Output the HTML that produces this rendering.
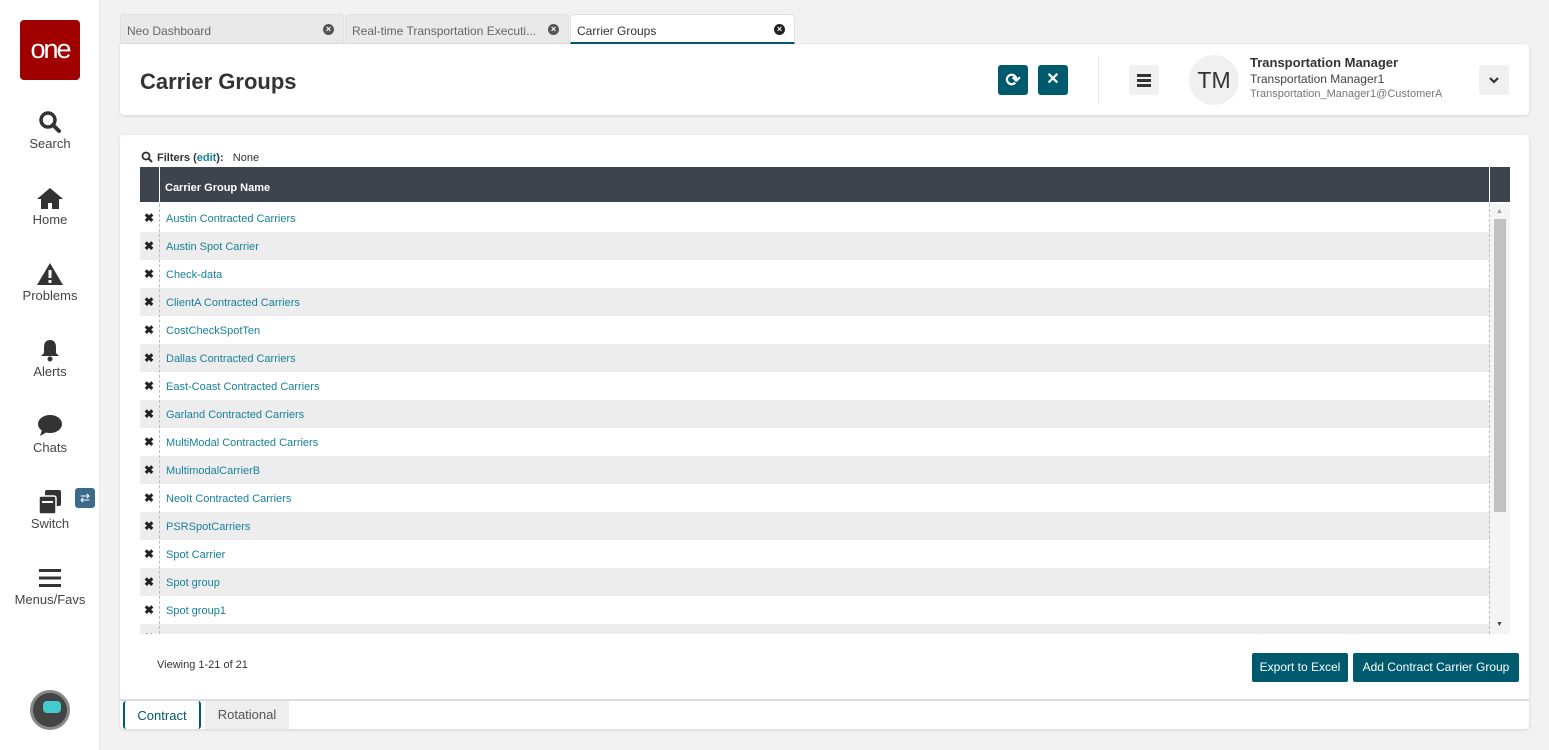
<!DOCTYPE html>
<html><head><meta charset="utf-8"><style>
*{box-sizing:border-box;margin:0;padding:0}
body{width:1549px;height:750px;background:#f2f2f2;font-family:"Liberation Sans",sans-serif;position:relative;overflow:hidden;color:#333}
.side{position:absolute;left:0;top:0;width:100px;height:750px;background:#fff;border-right:1px solid #e6e6e6}
.logo{position:absolute;left:20px;top:20px;width:60px;height:60px;background:#a00000;border-radius:4px;color:#fff;font-size:27px;text-align:center;line-height:58px;letter-spacing:-2px}
.nav{position:absolute;left:0;width:100px;text-align:center;font-size:13px;color:#444}
.nav svg{display:block;margin:0 auto 2px}
.tab{position:absolute;top:14px;height:30px;background:#e9e9e9;border-radius:4px 4px 0 0;font-size:12px;color:#666;padding:9px 6px;border:1px solid #e0e0e0}
.tab .x{position:absolute;right:9px;top:9px;width:11px;height:11px;border-radius:50%;background:#555;color:#fff;font-size:9px;line-height:11px;text-align:center;font-weight:bold}
.card{position:absolute;background:#fff;border-radius:4px;box-shadow:0 1px 3px rgba(0,0,0,.12)}
.btn{position:absolute;background:#005a6e;border-radius:3px;color:#fff;text-align:center}
.rows div.r{height:28px;position:relative;font-size:11px}
.rows div.r:nth-child(even){background:#ededed}
.r .x{position:absolute;left:4px;top:7px;font-size:12px;font-weight:bold;color:#222}
.r .t{position:absolute;left:26px;top:9px;color:#17819a}
</style></head><body>
<div class="side">
<div class="logo">one</div>
<div class="nav" style="top:110px"><svg width="24" height="24" viewBox="0 0 24 24"><circle cx="10" cy="10" r="7" stroke="#333" stroke-width="3.5" fill="none"/><path d="M15 15l6 6" stroke="#333" stroke-width="4" stroke-linecap="round"/></svg>Search</div>
<div class="nav" style="top:186px"><svg width="28" height="24" viewBox="0 0 28 24"><path d="M14 2L1 13h4v10h7v-6h4v6h7V13h4z" fill="#333"/></svg>Home</div>
<div class="nav" style="top:262px"><svg width="28" height="24" viewBox="0 0 28 24"><path d="M14 1L1 23h26z" fill="#333"/><rect x="12.5" y="8" width="3" height="8" fill="#fff"/><rect x="12.5" y="18" width="3" height="3" fill="#fff"/></svg>Problems</div>
<div class="nav" style="top:338px"><svg width="24" height="24" viewBox="0 0 24 24"><path d="M12 2c-4 0-6 3-6 7v6l-3 3h18l-3-3V9c0-4-2-7-6-7z" fill="#333"/><circle cx="12" cy="21" r="2.5" fill="#333"/></svg>Alerts</div>
<div class="nav" style="top:414px"><svg width="26" height="24" viewBox="0 0 26 24"><ellipse cx="13" cy="10" rx="12" ry="9" fill="#333"/><path d="M5 16l-2 6 7-4z" fill="#333"/></svg>Chats</div>
<div class="nav" style="top:490px"><svg width="26" height="24" viewBox="0 0 26 24"><rect x="8" y="0" width="16" height="16" rx="2" fill="#333"/><rect x="2" y="6" width="17" height="18" rx="2" fill="#333" stroke="#fff" stroke-width="1.5"/><rect x="5" y="11" width="11" height="2" fill="#fff"/></svg>Switch</div>
<div style="position:absolute;left:75px;top:488px;width:20px;height:20px;background:#3c6a8c;border-radius:3px;color:#fff;font-size:12px;text-align:center;line-height:20px">⇄</div>
<div class="nav" style="top:566px"><svg width="24" height="24" viewBox="0 0 24 24"><rect x="1" y="3" width="22" height="3" fill="#333"/><rect x="1" y="10.5" width="22" height="3" fill="#333"/><rect x="1" y="18" width="22" height="3" fill="#333"/></svg>Menus/Favs</div>
<div style="position:absolute;left:30px;top:690px;width:40px;height:40px;border-radius:50%;background:#444;border:3px solid #888"><div style="position:absolute;left:10px;top:8px;width:18px;height:12px;background:#4cc;border-radius:4px"></div></div>
</div>
<div class="tab" style="left:120px;width:224px">Neo Dashboard<span class="x">×</span></div>
<div class="tab" style="left:345px;width:224px">Real-time Transportation Executi...<span class="x">×</span></div>
<div class="tab" style="left:570px;width:225px;background:#fff;color:#333;border-bottom:2px solid #005a6e">Carrier Groups<span class="x" style="background:#222">×</span></div>
<div class="card" style="left:120px;top:44px;width:1409px;height:71px;border-radius:0 4px 4px 4px">
<div style="position:absolute;left:20px;top:25px;font-size:22px;font-weight:bold;color:#333">Carrier Groups</div>
<div class="btn" style="left:878px;top:21px;width:30px;height:30px;font-size:18px;line-height:30px;font-weight:bold">⟳</div>
<div class="btn" style="left:918px;top:21px;width:30px;height:30px;font-size:16px;line-height:30px;font-weight:bold">✕</div>
<div style="position:absolute;left:978px;top:12px;width:1px;height:48px;background:#e5e5e5"></div>
<div style="position:absolute;left:1009px;top:21px;width:30px;height:30px;background:#f0f0f0;border-radius:3px"><div style="position:absolute;left:8px;top:9px;width:14px;height:2.5px;background:#333;box-shadow:0 5px 0 #333,0 10px 0 #333"></div></div>
<div style="position:absolute;left:1069px;top:11px;width:50px;height:50px;border-radius:50%;background:#f0f0f0;font-size:23px;line-height:50px;text-align:center;color:#333">TM</div>
<div style="position:absolute;left:1130px;top:11px;font-size:13px;font-weight:bold">Transportation Manager</div>
<div style="position:absolute;left:1130px;top:28px;font-size:12px;color:#444">Transportation Manager1</div>
<div style="position:absolute;left:1130px;top:44px;font-size:11px;color:#777">Transportation_Manager1@CustomerA</div>
<div style="position:absolute;left:1359px;top:21px;width:30px;height:30px;background:#f0f0f0;border-radius:3px"><svg width="30" height="30" viewBox="0 0 30 30"><path d="M11 13l4 4 4-4" stroke="#333" stroke-width="2.2" fill="none"/></svg></div>
</div>
<div class="card" style="left:120px;top:135px;width:1409px;height:594px">
<svg style="position:absolute;left:21px;top:16px" width="12" height="12" viewBox="0 0 12 12"><circle cx="5" cy="5" r="3.5" stroke="#333" stroke-width="1.8" fill="none"/><path d="M7.5 7.5l3.5 3.5" stroke="#333" stroke-width="2"/></svg>
<div style="position:absolute;left:37px;top:17px;font-size:11px"><b>Filters (<span style="color:#17819a">edit</span>):</b> &nbsp;&nbsp;None</div>
<div style="position:absolute;left:20px;top:32px;width:1370px;height:35px;background:#3d444e"><div style="position:absolute;left:19px;top:0;width:1px;height:35px;background:#fff"></div><div style="position:absolute;left:1349px;top:0;width:1px;height:35px;background:#fff"></div><div style="position:absolute;left:25px;top:15px;color:#fff;font-size:11px;font-weight:bold">Carrier Group Name</div></div>
<div style="position:absolute;left:20px;top:69px;width:1350px;height:430px;overflow:hidden" class="rows">
<div class="r"><span class="x">✖</span><span class="t">Austin Contracted Carriers</span></div>
<div class="r"><span class="x">✖</span><span class="t">Austin Spot Carrier</span></div>
<div class="r"><span class="x">✖</span><span class="t">Check-data</span></div>
<div class="r"><span class="x">✖</span><span class="t">ClientA Contracted Carriers</span></div>
<div class="r"><span class="x">✖</span><span class="t">CostCheckSpotTen</span></div>
<div class="r"><span class="x">✖</span><span class="t">Dallas Contracted Carriers</span></div>
<div class="r"><span class="x">✖</span><span class="t">East-Coast Contracted Carriers</span></div>
<div class="r"><span class="x">✖</span><span class="t">Garland Contracted Carriers</span></div>
<div class="r"><span class="x">✖</span><span class="t">MultiModal Contracted Carriers</span></div>
<div class="r"><span class="x">✖</span><span class="t">MultimodalCarrierB</span></div>
<div class="r"><span class="x">✖</span><span class="t">NeoIt Contracted Carriers</span></div>
<div class="r"><span class="x">✖</span><span class="t">PSRSpotCarriers</span></div>
<div class="r"><span class="x">✖</span><span class="t">Spot Carrier</span></div>
<div class="r"><span class="x">✖</span><span class="t">Spot group</span></div>
<div class="r"><span class="x">✖</span><span class="t">Spot group1</span></div>
<div class="r"><span class="x">✖</span><span class="t"></span></div>
<div style="position:absolute;left:19px;top:0;height:430px;border-left:1px dashed #bbb"></div>
<div style="position:absolute;left:1349px;top:0;height:430px;border-left:1px dashed #bbb"></div>
</div>
<div style="position:absolute;left:1370px;top:69px;width:20px;height:430px;background:#f4f4f4"><div style="position:absolute;left:4px;top:15px;width:12px;height:293px;background:#c1c1c1"></div><div style="position:absolute;left:6px;top:4px;font-size:7px;color:#999">▲</div><div style="position:absolute;left:6px;top:417px;font-size:7px;color:#444">▼</div></div>
<div style="position:absolute;left:37px;top:524px;font-size:11px;color:#333">Viewing 1-21 of 21</div>
<div class="btn" style="left:1132px;top:518px;width:96px;height:29px;font-size:12px;line-height:29px;border-radius:2px">Export to Excel</div>
<div class="btn" style="left:1233px;top:518px;width:166px;height:29px;font-size:12px;line-height:29px;border-radius:2px">Add Contract Carrier Group</div>
<div style="position:absolute;left:0;top:564px;width:1409px;height:2px;background:#ddd"></div>
<div style="position:absolute;left:3px;top:566px;width:78px;height:28px;border:2px solid #005a6e;border-top:none;border-bottom:none;border-radius:3px;font-size:13px;color:#005a6e;text-align:center;line-height:30px">Contract</div>
<div style="position:absolute;left:85px;top:566px;width:84px;height:28px;background:#eee;font-size:13px;color:#555;text-align:center;line-height:28px">Rotational</div>
</div>
</body></html>
